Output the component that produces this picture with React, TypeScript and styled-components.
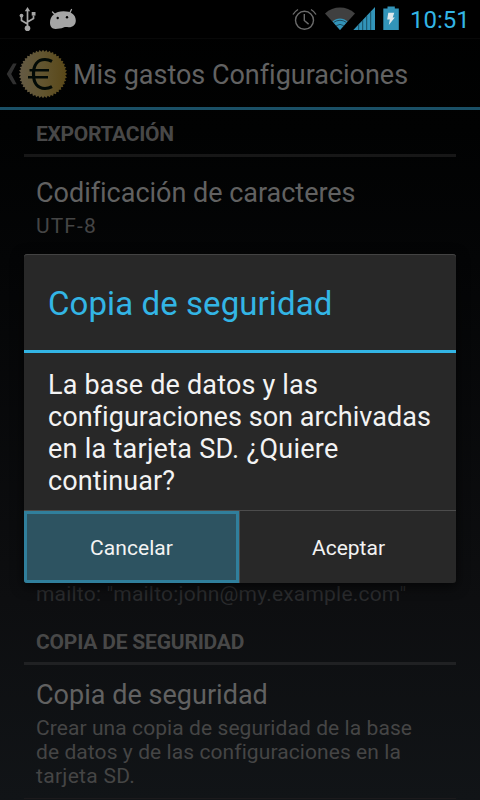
import React from 'react';
import styled, { createGlobalStyle } from 'styled-components';

const GlobalStyle = createGlobalStyle`
  * { box-sizing: border-box; }
  body {
    margin: 0;
    background: #000;
    font-family: Roboto, "Noto Sans", sans-serif;
    font-variant-ligatures: none;
    -webkit-font-smoothing: antialiased;
  }
`;

const Screen = styled.div`
  position: relative;
  display: flex;
  flex-direction: column;
  width: 480px;
  height: 800px;
  overflow: hidden;
  background: linear-gradient(#000 0, #010202 130px, #040506 260px, #0d0e10 600px, #111417 800px);
`;

const StatusBar = styled.header`
  display: flex;
  justify-content: space-between;
  flex: none;
  height: 39px;
  background: #000;
  border-bottom: 1px solid #080808;
`;

const StatusGroup = styled.div`
  display: flex;
  align-items: flex-start;
`;

const Clock = styled.time<{ $spacing: number }>`
  width: 79px;
  padding: 5px 0 0 9px;
  font-size: 24px;
  line-height: 30px;
  letter-spacing: ${(p) => p.$spacing}px;
  color: #33b5e5;
  white-space: nowrap;
`;

const ActionBar = styled.nav`
  display: flex;
  flex: none;
  align-items: flex-start;
  height: 71px;
  border-bottom: 3px solid #1a5066;
`;

const ScreenTitle = styled.h1<{ $spacing: number }>`
  margin: 20px 0 0 4px;
  font-size: 27px;
  font-weight: 400;
  line-height: 32px;
  letter-spacing: ${(p) => p.$spacing}px;
  color: #626262;
  white-space: nowrap;
`;

const Preferences = styled.main`
  display: flex;
  flex-direction: column;
  flex: none;
  padding: 0 24px;
`;

const Category = styled.h2<{ $spacing: number; $line: string }>`
  flex: none;
  height: 47px;
  margin: 0;
  padding: 12px 12px 0;
  border-bottom: 3px solid ${(p) => p.$line};
  font-size: 21px;
  font-weight: 700;
  line-height: 24px;
  letter-spacing: ${(p) => p.$spacing}px;
  color: #484848;
`;

const Preference = styled.section<{ $height: number; $top: number; $last?: boolean }>`
  flex: none;
  height: ${(p) => p.$height}px;
  padding: ${(p) => p.$top}px 0 0 12px;
  border-bottom: 1px solid ${(p) => (p.$last ? '#1c1a1c' : 'transparent')};
`;

const PrefTitle = styled.div<{ $spacing: number }>`
  height: 37px;
  font-size: 27px;
  line-height: 32px;
  letter-spacing: ${(p) => p.$spacing}px;
  color: #616161;
  white-space: nowrap;
`;

const Summary = styled.div<{ $spacing: number; $faint?: boolean }>`
  font-size: 21px;
  line-height: 24px;
  letter-spacing: ${(p) => p.$spacing}px;
  color: ${(p) => (p.$faint ? '#2a2b2d' : '#454545')};
  white-space: nowrap;
`;

const Overlay = styled.div`
  position: absolute;
  inset: 0;
  padding: 254px 24px 0;
`;

const Dialog = styled.div`
  display: flex;
  flex-direction: column;
  height: 329px;
  overflow: hidden;
  border-radius: 3px;
  background: #282828;
  box-shadow: inset 0 1px 0 #434343, 0 3px 12px 1px rgba(0, 0, 0, 0.6);
`;

const DialogTitle = styled.h3<{ $spacing: number }>`
  flex: none;
  height: 99px;
  margin: 0;
  padding: 31px 24px 0;
  border-bottom: 3px solid #33b5e5;
  font-size: 33px;
  font-weight: 400;
  line-height: 38px;
  letter-spacing: ${(p) => p.$spacing}px;
  color: #33b5e5;
  white-space: nowrap;
`;

const Message = styled.div`
  flex: 1;
  padding: 16px 0 0 24px;
  font-size: 27px;
  line-height: 32px;
  color: #f3f3f3;
  white-space: nowrap;
`;

const Line = styled.div<{ $spacing: number }>`
  letter-spacing: ${(p) => p.$spacing}px;
`;

const Actions = styled.div`
  display: flex;
  flex: none;
  height: 73px;
  border-top: 1px solid #4c4c4c;
`;

const Action = styled.button<{ $focused?: boolean; $spacing: number }>`
  flex: ${(p) => (p.$focused ? '0 0 216px' : '1')};
  padding: 2px 0 0 ${(p) => (p.$focused ? 0 : 1)}px;
  border: 0;
  border-right: ${(p) => (p.$focused ? '1px solid #4a4a4a' : '0')};
  background: ${(p) => (p.$focused ? '#2d5361' : 'transparent')};
  box-shadow: ${(p) => (p.$focused ? 'inset 0 0 0 3px #307f9c' : 'none')};
  font: 400 21px/24px Roboto, sans-serif;
  letter-spacing: ${(p) => p.$spacing}px;
  color: #f3f3f3;
`;

const UsbIcon = () => (
  <svg width="50" height="38" viewBox="0 0 50 38" fill="none" stroke="#a5a5a5" strokeWidth="1.7">
    <path d="M27.5 27V10M27.5 24l-6-3.5v-4M27.5 22l6-3.5v-3" />
    <path d="M24.8 11.2 27.5 7l2.7 4.2z" fill="#a5a5a5" stroke="none" />
    <circle cx="27.5" cy="28.3" r="2.8" fill="#a5a5a5" stroke="none" />
    <circle cx="21.5" cy="15.6" r="1.9" fill="#a5a5a5" stroke="none" />
    <path d="M31.7 12h3.8v3.6h-3.8z" fill="#a5a5a5" stroke="none" />
  </svg>
);

const DroidIcon = () => (
  <svg width="30" height="38" viewBox="50 0 30 38">
    <path
      d="M52.5 12l3 3M71.5 9.5l-1.8 3.5"
      stroke="#a5a5a5"
      strokeWidth="1.3"
      strokeLinecap="round"
    />
    <path
      d="M50 22.5C50 16 55.5 11.2 63.5 11.2 71 11.2 75.8 14.5 75.8 20.5 75.8 25 72.5 27.5 68.5 27.3 66.500 27 65.500 26.800 63.500 27.500 61 28.500 58.500 28.900 55.500 28.900 52 28.900 50 26.500 50 22.500z"
      fill="#a5a5a5"
    />
    <circle cx="57.7" cy="18" r="1.2" fill="#000" />
    <circle cx="67" cy="17.2" r="1.2" fill="#000" />
  </svg>
);

const AlarmIcon = () => (
  <svg width="32" height="38" viewBox="290 0 32 38" fill="none" stroke="#6b6b6b" strokeWidth="1.4">
    <circle cx="304.5" cy="20.3" r="9" />
    <path d="M304.3 14v6.5l4.3 3.6M293 14.500a14 14 0 0 1 5-5M311 9.500a14 14 0 0 1 5 5" />
  </svg>
);

const WifiIcon = () => (
  <svg width="30" height="38" viewBox="322 0 30 38" overflow="visible">
    <path d="M325 13.5C333.5 5.6 346.5 5.6 355 13.5L340 30z" fill="#404040" />
    <path d="M332.500 21.500C336.500 17.600 343.500 17.600 347.500 21.500L340 30z" fill="#3294b9" />
    <path
      d="M333.500 22.500q6.500-4.500 13 0M336.200 25.700q3.800-2.700 7.600 0"
      fill="none"
      stroke="#1c4253"
      strokeWidth="0.9"
    />
  </svg>
);

const SignalIcon = () => (
  <svg width="24" height="38" viewBox="352 0 24 38">
    <path d="M353.3 30L375 7v23z" fill="#3294b9" />
    <path
      d="M358.7 24v6M362.7 20v10M366.7 16v14M370.7 12v18"
      stroke="#16485b"
      strokeWidth="0.9"
    />
  </svg>
);

const BatteryIcon = () => (
  <svg width="25" height="38" viewBox="376 0 25 38">
    <path d="M387.5 6.600h7.300v2h4V30h-15.500V8.600h4.200z" fill="#3294b9" />
    <path d="M388.300 12.800h6l-1.600 4.600h2.100l-6 7.700 1-5.500h-2.600z" fill="#e0e8eb" />
  </svg>
);

const BackIcon = () => (
  <svg width="19" height="68" viewBox="0 39 19 68">
    <path d="M13 63.500h3.700L11.200 73.900l5.500 10.400H13L6.700 73.900z" fill="#303030" />
  </svg>
);

const COIN_TEETH = 44;
const coinOutline = Array.from({ length: COIN_TEETH * 2 }, (_, i) => {
  const radius = i % 2 ? 22.3 : 24.2;
  const angle = (i * Math.PI) / COIN_TEETH;
  return `${(43 + radius * Math.cos(angle)).toFixed(2)},${(74 + radius * Math.sin(angle)).toFixed(2)}`;
}).join(' ');

const CoinIcon = () => (
  <svg width="50" height="68" viewBox="19 39 50 68">
    <defs>
      <linearGradient id="coin" x1="0" x2="1">
        <stop offset="0" stopColor="#645a45" />
        <stop offset="0.5" stopColor="#62552f" />
        <stop offset="1" stopColor="#594717" />
      </linearGradient>
    </defs>
    <polygon points={coinOutline} fill="url(#coin)" />
    <g fill="none" stroke="#020a06">
      <path
        d="M52 61.300C49.500 60 47.500 59.500 45 59.500 37.500 59.500 33.500 65 33.500 74S37.500 88.500 45 88.500C47.500 88.500 49.500 88 52 86.700"
        strokeWidth="3.2"
      />
      <path d="M29.500 70.200H49M28 77.200h20" strokeWidth="2.5" />
    </g>
  </svg>
);

export default function App() {
  return (
    <>
      <GlobalStyle />
      <Screen>
        <StatusBar>
          <StatusGroup>
            <UsbIcon />
            <DroidIcon />
          </StatusGroup>
          <StatusGroup>
            <AlarmIcon />
            <WifiIcon />
            <SignalIcon />
            <BatteryIcon />
            <Clock $spacing={0}>10:51</Clock>
          </StatusGroup>
        </StatusBar>
        <ActionBar>
          <BackIcon />
          <CoinIcon />
          <ScreenTitle $spacing={-0.02}>Mis gastos Configuraciones</ScreenTitle>
        </ActionBar>
        <Preferences>
          <Category $spacing={-0.3} $line="#171717">EXPORTACIÓN</Category>
          <Preference $height={364} $top={20}>
            <PrefTitle $spacing={-0.02}>Codificación de caracteres</PrefTitle>
            <Summary $spacing={1.1}>UTF-8</Summary>
          </Preference>
          <Preference $height={97} $top={61}>
            <Summary $spacing={0.2} $faint>mailto: "mailto:john@my.example.com"</Summary>
          </Preference>
          <Category $spacing={-0.2} $line="#202123">COPIA DE SEGURIDAD</Category>
          <Preference $height={134} $top={14} $last>
            <PrefTitle $spacing={0.02}>Copia de seguridad</PrefTitle>
            <Summary $spacing={0.08}>Crear una copia de seguridad de la base</Summary>
            <Summary $spacing={0.08}>de datos y de las configuraciones en la</Summary>
            <Summary $spacing={0.3}>tarjeta SD.</Summary>
          </Preference>
        </Preferences>
        <Overlay>
          <Dialog role="dialog">
            <DialogTitle $spacing={0.08}>Copia de seguridad</DialogTitle>
            <Message>
              <Line $spacing={0.18}>La base de datos y las</Line>
              <Line $spacing={0.06}>configuraciones son archivadas</Line>
              <Line $spacing={0.26}>en la tarjeta SD. ¿Quiere</Line>
              <Line $spacing={0.1}>continuar?</Line>
            </Message>
            <Actions>
              <Action $focused $spacing={0.05}>Cancelar</Action>
              <Action $spacing={0}>Aceptar</Action>
            </Actions>
          </Dialog>
        </Overlay>
      </Screen>
    </>
  );
}
